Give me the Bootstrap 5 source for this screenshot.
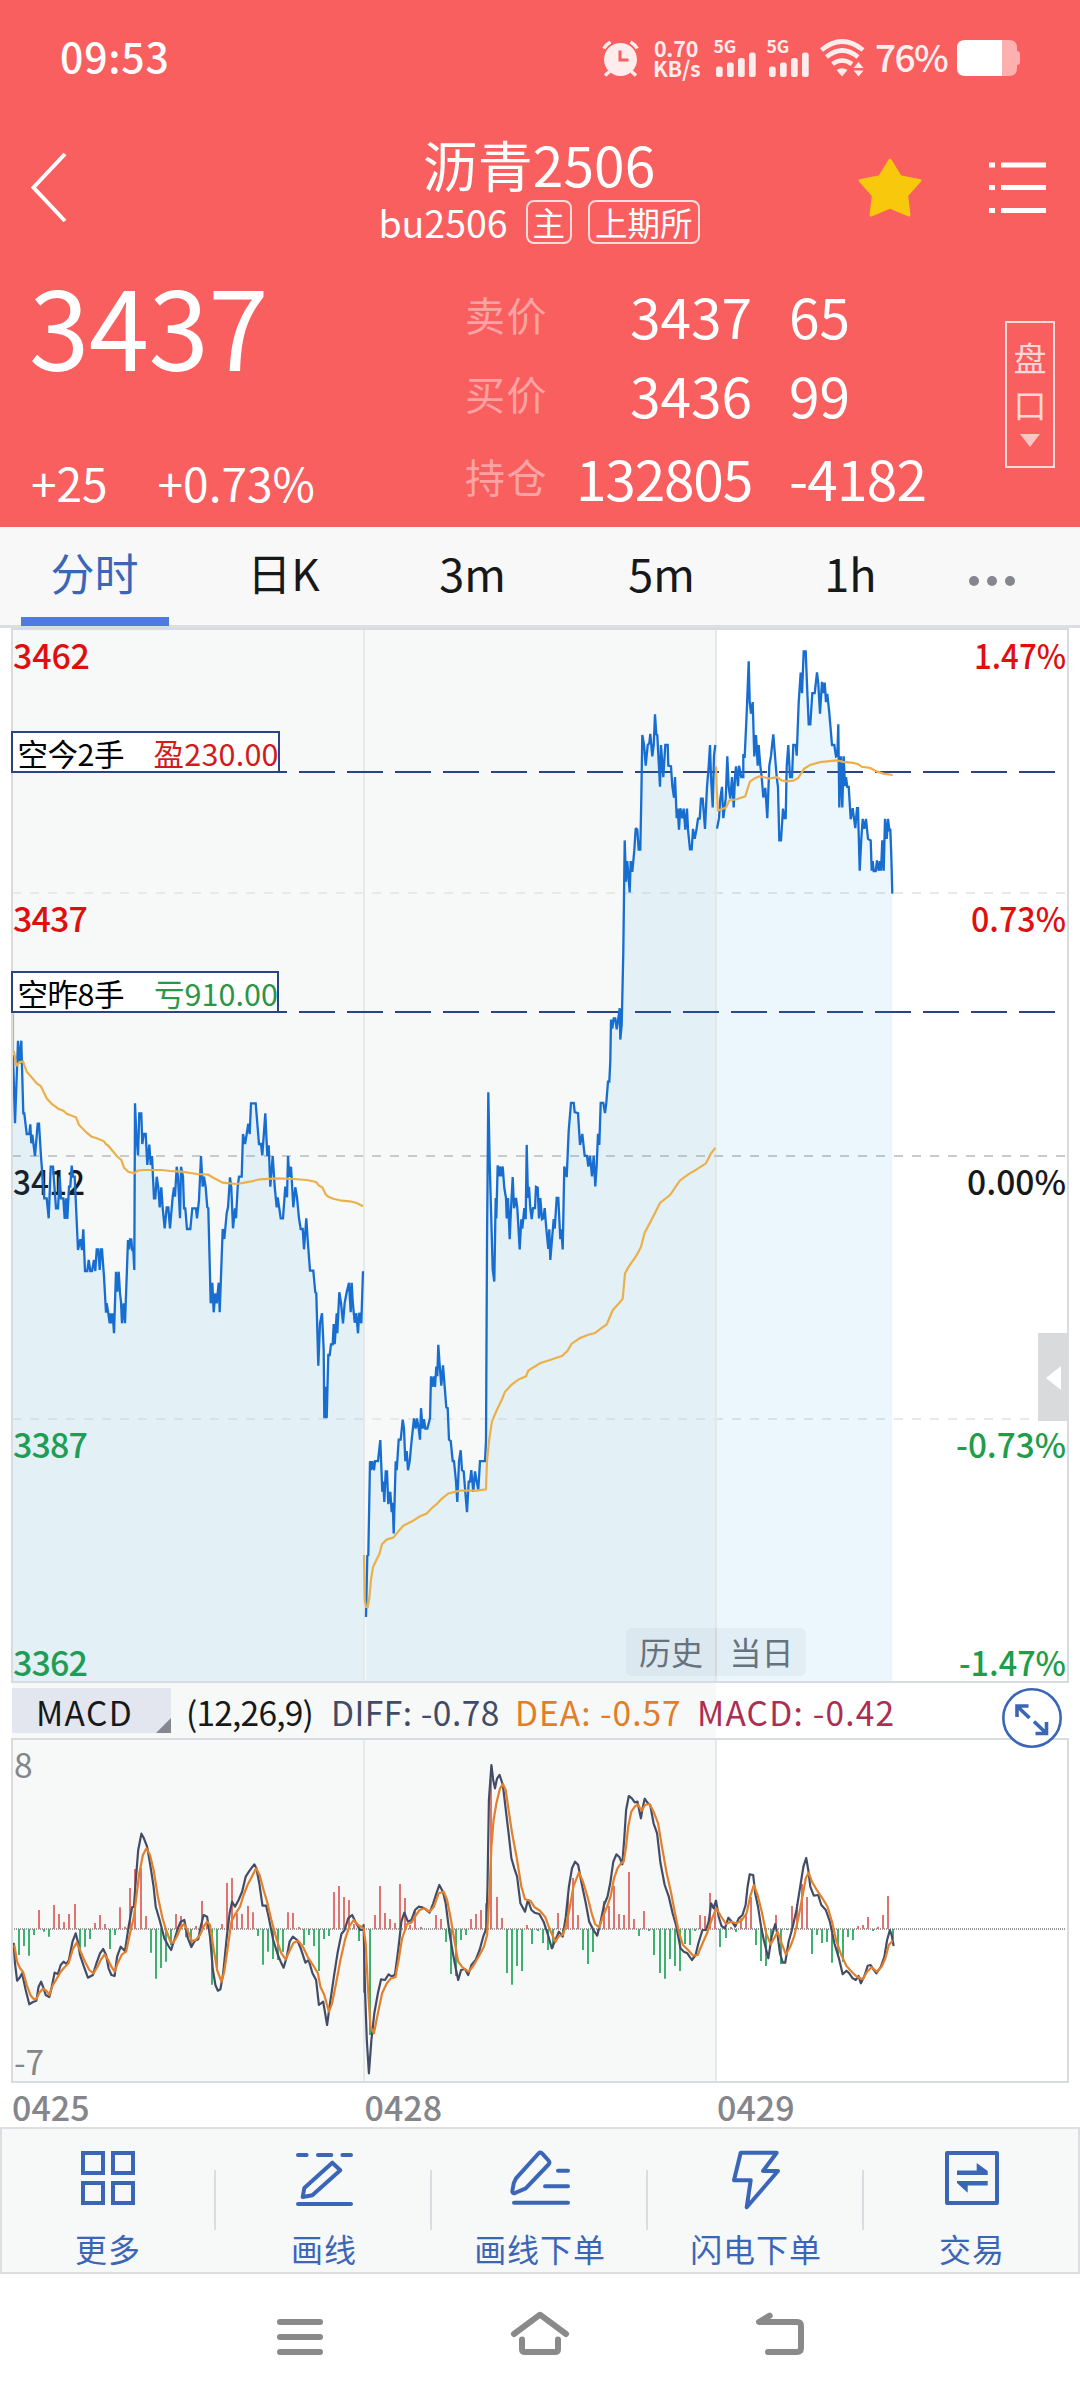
<!DOCTYPE html>
<html lang="zh-CN">
<head>
<meta charset="utf-8">
<meta name="viewport" content="width=device-width, initial-scale=1">
<title>沥青2506</title>
<link rel="stylesheet" href="https://cdn.jsdelivr.net/npm/bootstrap@5.3.0/dist/css/bootstrap.min.css">
<style>
:root{--brand:#f95f5f;--ink:#17181a;--blue:#3b66b8;--line:#dcdee1;--mute:#85868b}
body{width:1080px;height:2400px;overflow:hidden;background:#fff;color:var(--ink);font-family:"Noto Sans CJK SC","Noto Sans",sans-serif;line-height:1}
svg{display:block;flex:none;overflow:visible}
svg text{font-family:"Noto Sans CJK SC","Noto Sans",sans-serif}
.quote-head{background:var(--brand);height:527px;color:#fff}
.status-row{height:116px;padding:0 60px 0 60px}
.clock{font-size:41px;font-weight:500;letter-spacing:.8px;line-height:60px;margin-top:-6px}
.net-speed{font-size:21.5px;font-weight:700;line-height:20px;width:46px;margin:0 15px 0 14px;color:#ffecec}
.net-speed div{height:20px;letter-spacing:-.2px}
.batt-text{font-size:37px;font-weight:500;letter-spacing:-1.6px;width:74px;margin:-4px 8px 0 10px;line-height:50px;color:#ffefef}
.title-row{height:144px;padding:0 33px 0 30px}
.inst-name{font-size:55px;line-height:66px;letter-spacing:.1px}
.inst-code{font-size:37.5px;line-height:48px;letter-spacing:0;margin-right:18px}
.tag-box{font-size:32.5px;border:2px solid #ffdcdc;border-radius:8px;height:44px;line-height:39px;padding:0 5px}
.title-block{width:330px;margin-left:304px;padding-top:14px}
.last-price{font-size:108.6px;line-height:110px;margin:9px 0 0 29px;letter-spacing:-.5px}
.change-row{font-size:46px;line-height:50px;margin:0 0 6px 31px;gap:50px}
.quote-grid{width:500px}
.quote-line{height:79px;font-size:55px;line-height:78px}
.quote-line .cap{font-size:40px;letter-spacing:1.5px;color:#fda3a3;width:84px;line-height:76px}
.quote-line .val{width:203px}
.quote-line .vol{padding-left:37px}
.depth-box{width:50px;height:147px;border:2px solid #ffd9d9;font-size:33px;color:#ffd5d5}
.depth-box span{line-height:47px}
.down-tri{border:10px solid transparent;border-top:13px solid #fdc4c4;border-bottom:0;margin-top:6px}
.period-tabs{height:101px;background:#f8f8f8;border-bottom:3px solid var(--line);font-size:45px}
.period-tabs .tab-item{width:189px;line-height:91px;color:var(--ink);height:98px;position:relative}
.period-tabs .tab-item.zh{font-size:44px}
.period-tabs .current{color:var(--blue)}
.period-tabs .current::after{content:"";position:absolute;left:21px;width:148px;bottom:-1px;height:9px;background:#4f7be1}
.more-dots{width:94px;height:98px;gap:8px;padding-top:9px}
.more-dots i{width:10px;height:10px;border-radius:50%;background:#85868f}
.ind-bar{height:54px;padding:4px 0 5px 12px;font-size:33.5px;line-height:45px;background:linear-gradient(90deg,#fff 12px,#f7f9f8 12px 716px,#fff 716px)}
.ind-pick{width:159px;height:45px;background:#e4e6ef;position:relative;padding-left:24px;line-height:47px;letter-spacing:1.4px}
.ind-pick::after{content:"";position:absolute;right:0;bottom:0;border-left:15px solid transparent;border-bottom:15px solid #86878e}
.ind-val{line-height:47px;white-space:nowrap}
.expand-btn{position:absolute;right:17px;top:3px;z-index:2}
.date-row{height:43px;padding-left:12px;font-size:34px;font-weight:500;color:var(--mute);line-height:46px}
.date-row span{width:352.5px}
.tool-bar{height:147px;border:2px solid var(--line);background:#f7f8f8;color:var(--blue);overflow:hidden}
.tool-item{flex:none;width:216px;position:relative;padding-top:18px;font-size:32px;letter-spacing:.9px;white-space:nowrap}
.tool-item:first-child{margin-left:-2px}
.tool-item::after{content:"";position:absolute;right:0;top:41px;width:2px;height:60px;background:#dcdde2}
.tool-item span{line-height:40px;margin-top:17px}
.tool-item svg{fill:none;stroke:currentColor;stroke-width:4;stroke-linejoin:round;stroke-linecap:round}
.sys-nav{height:127px;padding:0 180px}
.sys-nav>div{width:240px;padding-top:31px}
.sys-nav svg{fill:none;stroke:#8a8a8a;stroke-width:6;stroke-linecap:round;stroke-linejoin:round}
</style>
<script src="https://cdn.jsdelivr.net/npm/bootstrap@5.3.0/dist/js/bootstrap.bundle.min.js"></script>
</head>
<body>
<header class="quote-head">
  <div class="status-row d-flex align-items-center">
    <div class="clock me-auto">09:53</div>
    <svg width="37" height="37" viewBox="0 0 37 37"><circle cx="18.5" cy="19.5" r="16.5" fill="#ffecec"/><path d="M7.500 31.500L3 35.500M29.500 31.500L34 35.500M1.800 8.500Q4 4.500 8.500 2M35.200 8.500Q33 4.500 28.500 2" fill="none" stroke="#ffecec" stroke-width="3.400"/><path d="M18 10.500V20H26.500" fill="none" stroke="#f95f5f" stroke-width="3"/></svg>
    <div class="net-speed text-center"><div>0.70</div><div>KB/s</div></div>
    <svg width="42" height="38" viewBox="0 0 42 38" fill="#ffecec"><text x="-.5" y="14" font-size="17.500" font-weight="700">5G</text><rect x="2" y="27.500" width="6.700" height="10.500" rx="2.500"/><rect x="13" y="23.500" width="6.700" height="14.500" rx="2.500"/><rect x="24" y="19" width="6.700" height="19" rx="2.500"/><rect x="35" y="13.500" width="6.700" height="24.500" rx="2.500"/></svg>
    <svg width="42" height="38" viewBox="0 0 42 38" fill="#ffecec" style="margin:0 11px"><text x="-.5" y="14" font-size="17.500" font-weight="700">5G</text><rect x="2" y="27.500" width="6.700" height="10.500" rx="2.500"/><rect x="13" y="23.500" width="6.700" height="14.500" rx="2.500"/><rect x="24" y="19" width="6.700" height="19" rx="2.500"/><rect x="35" y="13.500" width="6.700" height="24.500" rx="2.500"/></svg>
    <svg width="45" height="38" viewBox="0 0 45 38"><g fill="none" stroke="#ffecec" stroke-width="4.600"><path d="M1.500 11Q22 -6 43 11"/><path d="M6.500 18Q22 5 38 18"/><path d="M12.500 25Q22 18 32 25"/></g><path d="M16.500 31Q22 27.500 27.500 31L22 37.500ZM38.500 23L43.500 29H33.500ZM38.500 37.500L43.500 31.500H33.500Z" fill="#ffecec"/></svg>
    <div class="batt-text">76%</div>
    <svg width="63" height="36" viewBox="0 0 63 36"><path d="M45 0H52Q60 0 60 8V11Q63 11 63 14V22Q63 25 60 25V28Q60 36 52 36H45Z" fill="#fdb0b0"/><path d="M8 0H45V36H8Q0 36 0 28V8Q0 0 8 0Z" fill="#fff"/></svg>
  </div>
  <div class="title-row d-flex align-items-start">
    <svg width="40" height="74" viewBox="0 0 40 74" style="margin-top:35px"><path d="M35 3L3.500 36.500L35 70" fill="none" stroke="#fff" stroke-width="4"/></svg>
    <div class="title-block d-flex flex-column align-items-center">
      <div class="inst-name text-nowrap">沥青2506</div>
      <div class="d-flex align-items-center text-nowrap" style="margin-top:2px">
        <span class="inst-code">bu2506</span><span class="tag-box me-3">主</span><span class="tag-box">上期所</span>
      </div>
    </div>
    <svg class="ms-auto" width="64" height="60" viewBox="0 0 64 60" style="margin-top:42px"><path d="M32 2L42.200 18.800L62 22.600L48.600 37.500L51 57L32 49L13 57L15.400 37.500L2 22.600L21.800 18.800Z" fill="#f8c80c" stroke="#f8c80c" stroke-width="3" stroke-linejoin="round"/></svg>
    <svg width="58" height="54" viewBox="0 0 58 54" style="margin:45px 0 0 67px"><path d="M0 4H6M12 4H57M0 26.600H6M12 26.600H57M0 49.400H6M12 49.400H57" stroke="#fff" stroke-width="5"/></svg>
  </div>
  <div class="d-flex">
    <div class="d-flex flex-column" style="width:465px">
      <div class="last-price">3437</div>
      <div class="change-row d-flex mt-auto"><span>+25</span><span>+0.73%</span></div>
    </div>
    <div class="quote-grid pt-3">
      <div class="quote-line d-flex"><span class="cap">卖价</span><span class="val text-end">3437</span><span class="vol">65</span></div>
      <div class="quote-line d-flex"><span class="cap">买价</span><span class="val text-end">3436</span><span class="vol">99</span></div>
      <div class="quote-line d-flex pt-1"><span class="cap">持仓</span><span class="val text-end" style="letter-spacing:-1.200px">132805</span><span class="vol" style="letter-spacing:-.800px">-4182</span></div>
    </div>
    <div class="depth-box d-flex flex-column align-items-center" style="margin:61px 0 0 40px;padding-top:11px"><span>盘</span><span>口</span><i class="down-tri"></i></div>
  </div>
</header>

<nav class="period-tabs d-flex text-center">
  <div class="tab-item zh current">分时</div>
  <div class="tab-item zh">日K</div>
  <div class="tab-item">3m</div>
  <div class="tab-item">5m</div>
  <div class="tab-item">1h</div>
  <div class="more-dots d-flex align-items-center justify-content-center"><i></i><i></i><i></i></div>
</nav>

<main>
  <svg width="1080" height="1056" viewBox="0 628 1080 1056">
    <rect x="12" y="628" width="704" height="1056" fill="#f7f9f8"/>
    <path d="M364 628V1682M716 628V1682" stroke="#e6e9ea" stroke-width="2"/>
    <path d="M12 893H1066M12 1419H1066" stroke="#e8eaea" stroke-width="2" stroke-dasharray="9 9"/>
    <path d="M12 1156H1066" stroke="#c9cbcb" stroke-width="2" stroke-dasharray="9 9"/>
    <g font-size="34" font-weight="500">
      <g fill="#e00f0f"><text x="13" y="669" textLength="77">3462</text><text x="13" y="932" textLength="75">3437</text><text x="974" y="669" textLength="92" lengthAdjust="spacingAndGlyphs">1.47%</text><text x="971" y="932" textLength="95" lengthAdjust="spacingAndGlyphs">0.73%</text></g>
      <g fill="#17181a"><text x="13" y="1195" textLength="72" lengthAdjust="spacingAndGlyphs">3412</text><text x="967" y="1195" textLength="99" lengthAdjust="spacingAndGlyphs">0.00%</text></g>
      <g fill="#1f9d48"><text x="13" y="1457.500" textLength="75">3387</text><text x="13" y="1675.500" textLength="75">3362</text><text x="956" y="1457.500" textLength="110" lengthAdjust="spacingAndGlyphs">-0.73%</text><text x="959" y="1675.500" textLength="107" lengthAdjust="spacingAndGlyphs">-1.47%</text></g>
    </g>
    <path d="M11 772H1068M11 1012H1068" stroke="#2a4382" stroke-width="2" stroke-dasharray="36 12"/>
    <g id="priceLayer" fill="none" stroke-linejoin="miter" stroke-miterlimit="2"></g>
    <path d="M12 629H1068V1682H12Z" fill="none" stroke="#d8dbdf" stroke-width="2"/>
    <g fill="#fff" stroke="#2a4385" stroke-width="2"><rect x="12" y="732" width="267" height="40"/><rect x="12" y="972" width="266" height="40"/></g>
    <g font-size="30.500">
      <text x="17.500" y="765.500" textLength="107">空今2手</text><text x="153.500" y="765.500" textLength="125" fill="#d01c1c">盈230.00</text>
      <text x="17.500" y="1005.500" textLength="107">空昨8手</text><text x="154" y="1005.500" textLength="124" fill="#2a9747">亏910.00</text>
    </g>
    <rect x="626" y="1628" width="180" height="48" rx="6" fill="#143c50" fill-opacity=".04"/>
    <path d="M716 1628V1676" stroke="#143c50" stroke-opacity=".04" stroke-width="2"/>
    <g font-size="32" fill="#66727d"><text x="639" y="1665">历史</text><text x="729.500" y="1665">当日</text></g>
    <rect x="1038" y="1333" width="30" height="88" fill="#d9dadb"/><path d="M1046 1378L1061 1366V1390Z" fill="#fff"/>
  </svg>

  <div class="ind-bar d-flex position-relative">
    <div class="ind-pick">MACD</div>
    <span class="ind-val" style="margin-left:15px;width:145px;letter-spacing:-.800px">(12,26,9)</span>
    <span class="ind-val" style="width:184px;color:#424b66;letter-spacing:.500px">DIFF: -0.78</span>
    <span class="ind-val" style="width:182px;color:#e27d28;letter-spacing:1px">DEA: -0.57</span>
    <span class="ind-val" style="color:#ab2e54;letter-spacing:1.200px">MACD: -0.42</span>
    <svg class="expand-btn" width="62" height="62" viewBox="0 0 62 62" fill="none" stroke="#3b66b8"><circle cx="31" cy="31" r="28.700" fill="#fff" stroke-width="2.600"/><path d="M16 30V19H27.500M16 19L28.500 31M33 34.500L45 46M34.500 46.500H45.500V35" stroke-width="3.600"/></svg>
  </div>

  <svg width="1080" height="346" viewBox="0 1738 1080 346">
    <rect x="12" y="1738" width="704" height="345" fill="#f7f9f8"/>
    <path d="M364 1738V2082M716 1738V2082" stroke="#e6e9ea" stroke-width="2"/>
    <path d="M12 1929H1066" stroke="#9a9a9a" stroke-width="2" stroke-dasharray="1 1"/>
    <g id="macdLayer" fill="none" stroke-linejoin="round"></g>
    <path d="M12 1739H1068V2082H12Z" fill="none" stroke="#d8dbdf" stroke-width="2"/>
    <g font-size="33.500" fill="#85868b"><text x="14" y="1777.500">8</text><text x="14" y="2075">-7</text></g>
  </svg>
  <div class="date-row d-flex"><span>0425</span><span>0428</span><span>0429</span></div>
</main>

<footer>
  <div class="tool-bar d-flex">
    <div class="tool-item d-flex flex-column align-items-center"><svg width="64" height="64" viewBox="0 0 64 64" style="stroke-linejoin:miter"><path d="M7 6H27V26H7ZM37 6H57V26H37ZM7 36H27V56H7ZM37 36H57V56H37Z"/></svg><span>更多</span></div>
    <div class="tool-item d-flex flex-column align-items-center"><svg width="64" height="64" viewBox="0 0 64 64"><path d="M6 8H14.600M26 8H39.300M50.400 8H59M6 57H59M10.700 50L12.300 41L40.300 15.700L48.300 23.300L20.300 48.300Z"/></svg><span>画线</span></div>
    <div class="tool-item d-flex flex-column align-items-center"><svg width="64" height="64" viewBox="0 0 64 64"><path d="M50 23.700H60M37 39.300H60M6 55.700H60M4.300 44L5.800 36L8 31.300L30.500 6.500Q32.500 4.800 34.500 6.800L40.500 13.500Q42.300 15.500 40.500 17.500L17.700 41.300L7 46Q4.300 47 4.300 44Z"/></svg><span>画线下单</span></div>
    <div class="tool-item d-flex flex-column align-items-center"><svg width="64" height="64" viewBox="0 0 64 64"><path d="M16.700 5.700H52.700L39 24H54L22.700 60.300L26.700 33.300H10Z"/></svg><span>闪电下单</span></div>
    <div class="tool-item d-flex flex-column align-items-center"><svg width="64" height="64" viewBox="0 0 64 64"><rect x="7" y="6" width="50" height="50"/><path d="M17 23.500H36.700V16L47.700 24V28H17ZM17 34H47.700V38.500H27.700V45.700L17 36Z" fill="currentColor" stroke="none"/></svg><span>交易</span></div>
  </div>
  <div class="sys-nav d-flex">
    <div class="d-flex justify-content-center"><svg width="64" height="60" viewBox="0 0 64 60"><path d="M12 17H52M12 32H52M12 47H52"/></svg></div>
    <div class="d-flex justify-content-center"><svg width="64" height="60" viewBox="0 0 64 60"><path d="M6 29L32 9.700L58 29M14 34.500V44Q14 47 17 47H47Q50 47 50 44V34.500"/></svg></div>
    <div class="d-flex justify-content-center"><svg width="64" height="60" viewBox="0 0 64 60"><path d="M21.700 10.700L11 17H49Q53 17 53 21V43Q53 47 49 47H20"/></svg></div>
  </div>
</footer>

<script>
/* Each series is a list of [originX, originY, unitsPerPxX, unitsPerPxY, "x,y x,y ..."] pieces. */
const day1 = [[0,1000,3,3,"39,165 45,370 54,122 58,190 64,122 70,340 73,340 80,402 88,402 91,373 94,430 97,404 105,468 113,371 117,371 123,470 133,595 140,595 146,655 152,500 159,500 168,625 174,625 179,530 183,595 190,595 194,657 198,595 202,657 207,560 211,560 215,497 219,530 224,530 234,750 241,718 246,750 250,688 255,813 262,813 266,780 271,813 276,813 282,780 286,813 290,748 295,748 299,810 303,748 306,748 312,830 318,938 320,910 325,940 329,970 332,940 336,970 338,940 342,1000 348,815 352,875 356,815 360,880 363,905 366,970 371,910 375,970 384,720 388,748 390,718 394,718 397,750 400,750 403,810 405,310 409,402 414,466 418,340 424,340 427,432 431,402 437,402 442,495 448,434 452,495 456,468 462,595 466,595 470,530 475,562 479,622 484,562 488,625 494,685 500,622 505,622 510,685 518,590 522,562 525,590 530,500 534,530 540,655 543,500 549,530 552,625 556,625 561,687 571,687 577,625 588,625 591,655 597,600 603,468 608,560 612,530 617,562 622,622 625,625 632,910 637,848 641,937 646,880 650,910 656,848 659,937 668,687 673,717 680,640 684,622 690,532 694,562 699,685 705,625 708,655 713,560 717,530 725,530 729,402 735,432 740,402 745,371 749,402 753,310 767,310 777,432 783,432 787,466 796,340 802,468 806,436 811,560 818,468 824,560 830,622 833,592 838,625 842,655 849,655 856,560 861,592 864,468 868,530 873,500 880,622 886,562 891,592 897,655 902,687 908,687 912,748 919,655 923,720 930,812 940,812 946,877 949,880 955,1097 960,970 966,940 971,1050 973,1255 976,1160 980,1255 985,1065 989,1065 993,1033 998,1033 1001,972 1004,1033 1010,940 1012,1000 1018,877 1023,908 1029,970 1034,908 1040,877 1047,848 1052,937 1055,848 1058,905 1064,968 1069,940 1074,1000 1078,938 1084,970 1089,814"]];
const day2 = [[350,1000,3,2.45,"48,1512 52,1362 55,1360 60,1130 63,1152 67,1130 72,1152 75,1130 84,1130 91,1078 97,1205 100,1180 103,1230 107,1155 111,1155 115,1235 121,1205 125,1255 128,1232 131,1307 137,1130 140,1152 146,1077 152,1077 158,1028 162,1050 166,1130 170,1105 174,1152 179,1130 185,1077 192,1025 197,1050 201,1025 206,1050 210,1077 213,1000 218,1050 222,1027 226,1050 232,1050 240,1025 243,922 247,948 251,922 255,948 259,898 262,922 265,845 269,895 274,945 279,895 284,948 289,998 293,1000 297,1077 302,1080 308,1130 312,1130 318,1180 322,1230 327,1130 332,1103 336,1152 341,1155 346,1205 351,1255 356,1180 360,1180 364,1152 370,1205 375,1155 380,1180 385,1200 390,1130 405,1130 408,1080 411,600 415,226 419,400 428,660 433,690 437,485 439,535 443,405 447,432 450,408 454,432 458,408 463,460 468,485 470,535 474,485 479,586 483,510 488,434 492,510 498,485 502,510 509,611 514,537 517,560 523,510 527,537 530,355 534,485 537,458 541,510 545,537 549,510 555,510 558,458 563,460 567,535 571,485 576,537 580,535 584,510 589,560 595,610 598,562 601,637 606,586 611,537 614,560 620,485 625,485 631,586 634,562 638,611 643,408 650,434 656,320 663,252 671,252 674,275 684,277 690,355 697,328 704,382 711,382 715,408 720,382 726,432 731,382 736,457 740,405 744,328 748,355 752,252 760,252 765,277 769,252 774,200 778,200 781,150 783,48 787,70 791,45 796,45 800,72 805,45 809,20 811,97 815,60"],
[600,620,3,2.8,"66,1097 70,930 74,617 78,733 82,675 89,763 92,675 97,705 103,645 107,583 112,587 116,643 121,643 124,500 127,322 132,348 137,408 143,350 148,345 151,319 157,382 161,350 165,264 169,320 172,322 180,467 183,350 190,440 196,350 203,350 205,408 213,410 217,465 222,497 225,440 230,555 233,528 237,587 241,527 247,555 251,528 256,587 261,528 264,587 270,642 275,642 279,585 284,613 290,583 294,556 299,556 303,500 308,500 315,585 321,467 326,410 330,350 333,440 338,525 342,380 346,350"]];
const day3 = [[600,620,3,2.8,"351,584 357,555 361,500 366,467 370,555 377,500 382,382 386,468 391,500 396,440 401,525 405,440 408,410 414,465 417,408 424,440 430,440 430,380 434,382 440,260 446,116 449,230 453,262 458,230 463,382 468,322 473,408 476,350 481,408 485,440 490,497 496,470 502,555 508,408 513,380 517,345 520,320 525,380 530,440 534,468 538,617 543,617 549,528 553,555 557,555 560,410 565,350 570,440 576,440 580,350 587,350 590,380 596,230 602,147 606,205 611,88 617,88 621,180 626,292 631,292 637,205 644,205 651,147 655,178 660,262 666,173 671,205 674,175 678,230 682,207 688,260 696,350 703,350 708,382 712,380 715,292 718,525 723,382 727,525 731,382 735,465 738,440 742,467 746,467 752,558 758,527 762,555 766,583 771,527 774,527 779,702 784,613 788,557 793,585 798,557 804,613 812,617 815,702 818,675 821,703 827,703 831,673 836,702 840,675 843,702 847,617 851,702 855,557 860,613 864,557 868,587 871,585 874,660 877,766"]];
const avg1 = [[0,1000,3,3,"39,40 39,150 43,160 49,198 58,187 69,184 80,215 100,238 110,250 122,258 140,295 155,312 175,326 190,332 200,341 228,352 237,375 260,398 275,410 290,415 312,424 318,433 325,437 350,468 364,480 372,503 385,515 403,520 412,512 430,510 485,510 510,513 545,515 590,522 625,524 640,533 668,548 710,552 750,545 780,538 830,535 880,537 920,540 948,546 957,557 967,562 977,583 985,590 1000,596 1025,602 1050,604 1070,609 1089,619"]];
const avg2 = [[350,1000,3,2.45,"42,1360 44,1470 48,1487 53,1487 58,1465 63,1420 69,1390 80,1370 88,1358 96,1333 110,1322 130,1317 150,1297 160,1288 185,1278 210,1265 230,1258 245,1245 260,1235 275,1222 295,1209 330,1202 380,1202 408,1199 411,1130 418,1075 426,1032 440,1005 455,980 465,960 485,942 505,930 528,922 535,908 570,890 600,882 637,872 652,860 665,842 690,828 715,820 735,816 755,803 770,795 788,760 805,745 818,732 825,670 835,655 860,625 873,605 884,570 905,538 930,497 960,478 990,442 1015,427 1040,415 1068,400 1082,377 1096,362"]];
const avg3 = [[600,620,3,2.8,"348,410 350,470 354,533 365,530 378,525 388,505 410,502 436,494 442,475 450,452 465,443 478,438 495,441 508,444 530,440 545,449 560,452 580,450 595,442 612,417 630,406 660,398 710,393 730,397 760,400 775,404 785,411 810,414 830,424 850,430 878,434"]];
const L = [0,1620,2.8,3], R = [540,1620,2.904,3];
const diff = [[...L,"38,968 42,1030 48,1082 56,1072 62,1060 72,1110 82,1153 92,1146 102,1142 108,1100 115,1085 122,1105 128,1125 138,1131 145,1100 153,1058 162,1062 170,1035 178,1025 186,1032 193,1020 203,965 212,940 218,965 224,1005 235,1040 246,1073 260,1065 270,1030 280,1000 289,987 297,1005 304,1045 312,1065 321,1068 328,1010 338,980 350,993 360,920 370,862 375,860 381,770 387,690 396,641 403,655 412,680 420,730 430,800 436,860 447,900 460,955 470,975 479,990 488,960 498,925 506,905 516,900 526,955 536,981 545,963 555,958 562,920 570,885 580,890 588,950 596,1050 603,1095 610,1112 617,1108 625,1060 635,950 643,880 650,845 658,860 668,840 678,815 688,770 697,755 705,743 712,733 718,745 726,790 735,857 745,857 752,890 765,960 778,1005 786,1025 794,1043 803,1010 811,965 820,950 832,960 842,985 855,1028 864,1020 875,1060 885,1080 893,1155 905,1145 916,1215 924,1150 935,1070 945,1000 956,942 965,930 975,895 986,885 995,905 1008,930 1015,930 1018,915 1022,1110 1027,1260 1033,1360 1040,1260 1048,1180 1058,1120 1067,1078 1078,1080 1088,1063 1098,1070 1106,1063 1115,990 1124,905 1132,878 1142,905 1152,900 1162,870 1172,860 1182,862 1192,868 1203,878 1213,850 1222,820 1230,795 1240,815 1248,850 1258,935 1268,1000 1276,1045 1283,1080 1291,1050 1302,1047 1311,1065 1320,1035 1332,1020 1343,990 1353,950 1362,925 1365,800 1369,540 1376,435 1381,480 1386,505 1392,475 1399,465 1408,495 1415,560 1424,640 1432,715 1440,745 1448,770 1457,850 1470,875 1478,840 1488,870 1497,878 1510,882 1522,905 1533,940 1545,985"],
[...R,"45,960 55,935 66,950 75,890 84,800 93,745 102,725 111,735 120,785 133,850 143,905 155,930 166,947 175,910 186,855 196,830 204,790 213,725 222,703 231,712 239,733 245,650 250,570 258,528 267,535 275,547 283,545 288,570 293,595 298,565 304,536 312,548 320,555 330,610 340,640 350,730 362,795 374,830 385,880 395,915 408,985 418,995 428,1000 441,1020 452,1005 460,970 472,930 482,930 490,905 497,850 504,865 511,842 519,890 527,918 537,925 547,893 557,905 567,920 577,895 588,885 597,855 603,800 609,763 619,765 625,820 633,860 642,920 650,960 663,1015 673,950 683,912 690,945 697,1000 705,1028 712,1028 722,965 733,925 745,870 757,790 765,740 773,714 779,750 785,800 795,827 808,825 817,855 830,870 842,905 855,970 868,1015 879,1063 890,1052 898,1060 908,1075 917,1080 925,1068 932,1090 942,1068 952,1037 960,1035 968,1048 977,1060 990,1040 1000,1010 1008,960 1016,930 1021,945 1027,978"]];
const dea = [[...L,"40,975 48,1025 56,1045 65,1057 75,1095 85,1125 93,1136 102,1138 110,1118 120,1106 130,1112 138,1125 148,1095 158,1078 170,1055 182,1040 192,1030 205,985 215,968 225,993 238,1025 250,1050 262,1060 273,1040 283,1018 293,1003 302,1018 312,1040 321,1055 330,1028 342,1003 353,995 362,950 375,890 382,830 390,760 400,705 410,685 420,705 430,750 442,830 455,895 465,930 477,965 485,968 495,950 505,925 515,912 525,930 537,963 548,960 560,945 570,920 580,905 588,915 598,985 608,1050 620,1085 628,1055 638,980 648,905 660,880 672,860 682,825 693,795 705,770 717,745 727,765 738,810 748,845 760,900 775,960 788,1000 800,1018 812,990 822,968 835,962 848,980 862,1012 876,1035 890,1060 897,1100 908,1125 921,1175 930,1150 942,1085 953,1020 967,955 978,920 990,900 1003,915 1018,925 1024,970 1030,1100 1037,1220 1047,1240 1058,1180 1070,1120 1083,1090 1095,1075 1107,1072 1116,1020 1126,955 1140,912 1152,908 1163,888 1175,870 1188,865 1203,875 1215,860 1228,820 1242,815 1252,840 1262,895 1272,960 1283,1025 1295,1042 1312,1055 1325,1038 1340,1010 1355,980 1364,945 1370,830 1376,680 1382,600 1390,550 1400,505 1408,492 1416,510 1424,570 1434,640 1447,715 1460,800 1470,838 1485,842 1497,862 1512,872 1527,892 1540,930"],
[...R,"45,965 55,948 66,945 75,920 85,870 97,800 113,757 125,785 138,830 150,880 160,912 172,922 183,890 195,860 205,830 215,775 225,745 235,730 243,725 250,680 256,620 265,575 275,560 284,553 295,572 305,555 318,552 330,575 343,610 355,685 368,760 380,815 392,880 403,935 415,975 430,990 445,1007 458,1005 470,975 485,940 500,895 512,865 525,888 540,912 555,905 570,910 585,902 600,880 610,830 621,795 632,825 645,880 657,940 670,973 680,955 690,935 702,970 714,1003 727,980 738,950 750,895 762,830 772,775 780,758 790,785 805,812 820,835 835,860 848,905 860,960 875,1005 890,1038 905,1055 920,1070 937,1078 950,1055 963,1042 978,1055 992,1040 1003,1015 1013,975 1024,962"]];
const bars = [[...L,"52,1005 67,978 81,1007 95,945 109,870 123,935 137,950 151,855 166,882 180,906 194,882 209,852 223,992 237,980 252,957 266,909 280,885 294,912 308,987 322,945 336,862 350,920 365,804 379,747 394,744 408,888 422,998 436,1076 451,1044 465,1025 480,976 493,882 507,888 521,952 535,978 550,918 565,843 580,905 593,1094 607,1053 621,912 636,789 650,774 664,880 678,882 693,858 708,877 722,948 736,1034 750,995 765,1017 778,1020 792,995 807,877 821,879 836,921 850,975 864,945 879,978 893,1053 907,957 921,948 935,816 949,798 963,831 977,840 992,912 1006,963 1020,1118 1036,1245 1049,885 1063,798 1077,879 1091,897 1106,909 1120,792 1134,834 1149,915 1163,873 1178,921 1220,885 1234,897 1249,966 1263,1062 1277,1068 1291,960 1305,945 1319,897 1333,882 1348,870 1361,850 1376,477 1391,831 1405,894 1419,1059 1433,1094 1447,1038 1462,1053 1476,915 1490,972 1505,933 1519,969 1534,990 1548,985 1562,879"],
[...R,"67,948 81,825 96,774 110,885 125,990 139,1032 155,996 169,942 185,843 199,858 214,798 229,882 244,885 258,756 273,897 288,948 302,873 317,933 331,1005 347,1059 362,1076 376,1017 391,1038 406,1053 421,972 435,975 450,933 464,885 479,888 494,819 509,862 524,981 539,954 554,921 569,936 583,895 598,880 613,831 627,975 642,1023 657,1038 671,960 686,885 700,1032 716,930 731,858 745,852 760,792 775,831 790,1002 804,945 819,969 833,966 849,1028 864,1010 879,1026 893,951 908,960 922,918 937,915 952,891 966,933 981,920 996,885 1011,828 1026,957"]];
const toPts = s => s.flatMap(([ox,oy,kx,ky,t]) => t.split(" ").map(p => { const [x,y] = p.split(","); return [+(ox+x/kx).toFixed(1), +(oy+y/ky).toFixed(1)]; }));
const lineD = p => "M" + p.map(q => q.join(" ")).join("L");
const el = (d, a) => `<path d="${d}" ${a}/>`;
let out = "";
for (const s of [day1, day2, day3]) { const p = toPts(s), a = p[0][0], b = p[p.length-1][0]; out += el(lineD(p) + `V1682H${a}Z`, 'fill="#1e96e6" fill-opacity=".09"') }
for (const s of [day1, day2, day3]) out += el(lineD(toPts(s)), 'stroke="#176dd0" stroke-width="2.3"');
for (const s of [avg1, avg2, avg3]) out += el(lineD(toPts(s)), 'stroke="#ebb04a" stroke-width="2.2"');
document.getElementById("priceLayer").innerHTML = out;
let m = "", up = "", dn = "";
for (const [x,y] of toPts(bars)) { const d = `M${Math.round(x)} 1929V${y}`; if (y < 1929) up += d; else dn += d }
m += el(up, 'stroke="#df7370" stroke-width="2"') + el(dn, 'stroke="#3fb071" stroke-width="2"');
m += el(lineD(toPts(diff)), 'stroke="#434c66" stroke-width="2.2"') + el(lineD(toPts(dea)), 'stroke="#e4802b" stroke-width="2.2"');
document.getElementById("macdLayer").innerHTML = m;
</script>
</body>
</html>
